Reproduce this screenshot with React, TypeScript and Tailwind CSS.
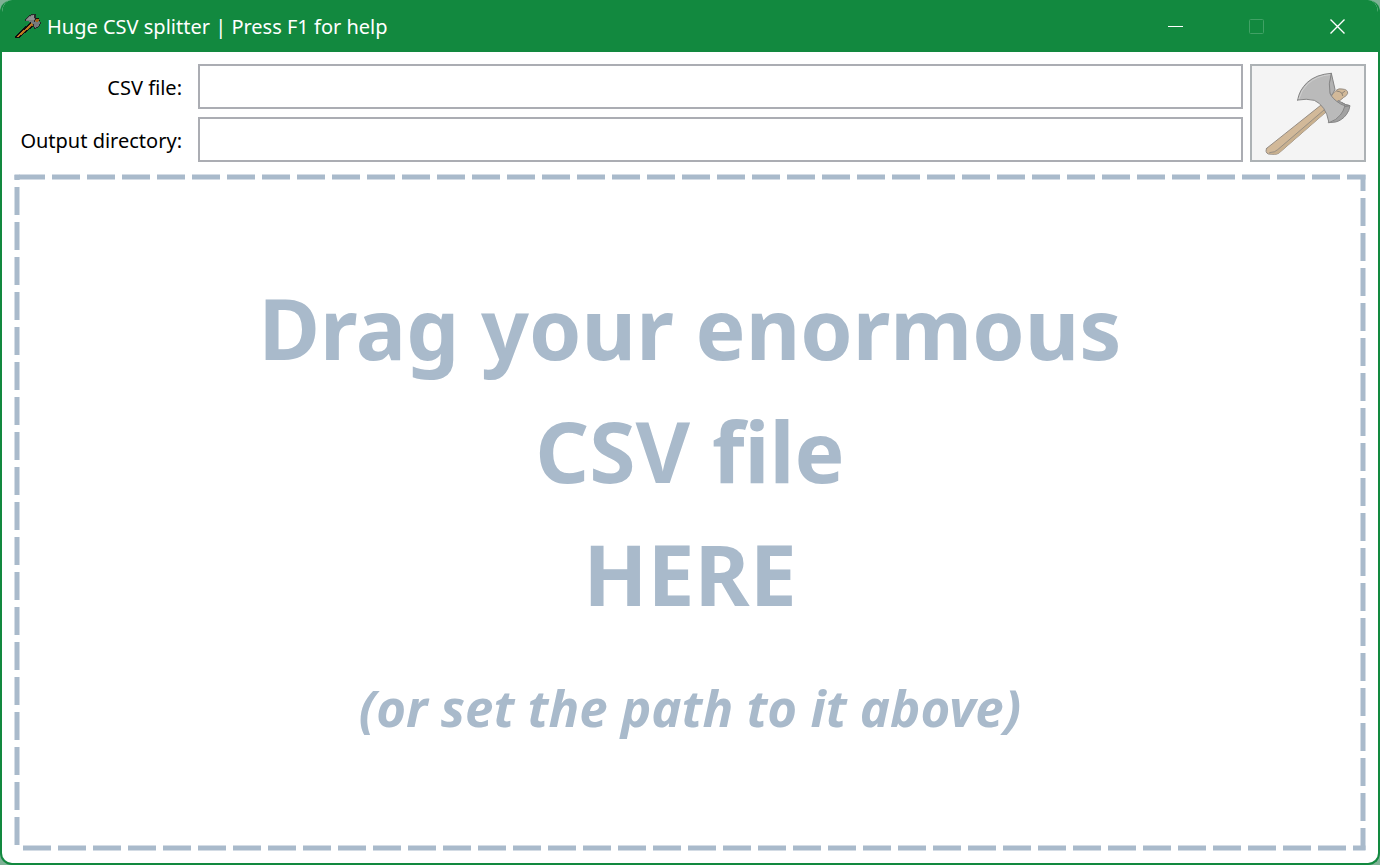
import { useState } from "react";

function AxeIcon({ className }: { className?: string }) {
  return (
    <svg viewBox="42 38 84 81" className={className} aria-hidden="true" shapeRendering="crispEdges">
      <path d="M45 114 L45 108 L92 64 L108 54 L117 54 L119 62 L102 76 L56 114 Z" fill="#111" />
      <path d="M48 111 L96 67 L110 57 L116 60 L100 74 L54 111 Z" fill="#b06c1a" />
      <path d="M52 109 L98 69" stroke="#c07a22" strokeWidth="4" />
      <path d="M74 63 Q80 46 102 41 L107 44 L108 56 L122 66 Q121 78 105 86 L98 70 Q92 62 74 63 Z" fill="#77797a" />
      <path d="M74 63 Q80 46 102 41 L107 44 L108 56 M122 66 Q121 78 105 86 L98 70" fill="none" stroke="#1b1b1b" strokeWidth="2.5" />
      <path d="M80 58 Q88 48 101 45 L102 58 Z" fill="#8f9191" />
      <path d="M105 55 L118 56 L117 62 L108 66 Z" fill="#a76318" />
      <path d="M103 43 L106 57 L101 66" stroke="#1b1b1b" strokeWidth="2.5" fill="none" />
    </svg>
  );
}

function LargeAxe({ className }: { className?: string }) {
  return (
    <svg viewBox="86 46 264 255" className={className} aria-hidden="true" strokeLinejoin="round" strokeLinecap="round">
      <path
        d="M94 278 L256 149 L304 103 Q310 98 320 100 Q338 101 337 113 Q335 120 324 126 L272 169 L131 292 Q126 296 117 296 L99 295 Q88 290 94 278 Z"
        fill="#d2b999"
        stroke="#968d84"
        strokeWidth="3"
      />
      <path d="M131 292 L272 169 L266 162 L126 284 Q120 289 103 293 Q112 297 123 295 Z" fill="#c8b08f" />
      <path d="M103 291 Q120 290 127 282 L266 163" fill="none" stroke="#8d877f" strokeWidth="2.5" />
      <path d="M304 106 Q315 107 320 113 L322 120 M320 113 L328 107" fill="none" stroke="#82796f" strokeWidth="2.5" />
      <path d="M288 53 L299 101 L289 120 L278 103 Z" fill="#b2b2b2" stroke="#858585" strokeWidth="3" />
      <path
        d="M309 135 L320 141 Q332 149 344 150 Q342 165 333 177 Q320 194 301 199 L280 201 Z"
        fill="#a2a2a2"
        stroke="#858585"
        strokeWidth="3"
      />
      <path
        d="M187 133 Q191 104 216 80 Q243 56 288 53 Q278 86 284 113 Q291 130 316 145 Q324 149 329 150 Q324 168 315 178 Q304 193 281 201 Q276 174 265 158 Q252 140 237 134 Q214 128 187 133 Z"
        fill="#bababa"
        stroke="#858585"
        strokeWidth="3"
      />
      <path d="M191 129 Q196 105 218 84 Q243 61 283 57" fill="none" stroke="#d0d0d0" strokeWidth="3" />
      <path d="M320 141 Q331 149 344 150 L329 153" fill="none" stroke="#858585" strokeWidth="3" />
    </svg>
  );
}

function DashedFrame() {
  return (
    <svg
      className="pointer-events-none absolute inset-0 size-full"
      aria-hidden="true"
      stroke="#a9bacb"
      strokeWidth="5"
      strokeDasharray="28 7"
    >
      <line x1="6" y1="3" x2="100%" y2="3" strokeDashoffset="2.5" transform="translate(-0.5 0)" />
      <line x1="100%" y1="2" x2="100%" y2="100%" transform="translate(-3 -1)" strokeDashoffset="12" />
      <line x1="5" y1="100%" x2="100%" y2="100%" transform="translate(-0.5 -3)" strokeDashoffset="-4.5" />
      <line x1="3" y1="1" x2="3" y2="100%" strokeDashoffset="-12" />
      <line x1="0.5" y1="3" x2="6" y2="3" strokeDasharray="none" />
    </svg>
  );
}

export default function App() {
  const [file, setFile] = useState("");
  const [directory, setDirectory] = useState("");
  const field =
    "min-w-0 border-2 border-[#abadb3] bg-white px-2 text-xl text-black outline-none focus:border-[#0078d7]";

  return (
    <div className="min-h-screen bg-[#7fb296] font-['Noto_Sans','Open_Sans',sans-serif]">
      <div className="flex min-h-screen flex-col overflow-hidden rounded-xl border-x-2 border-b-2 border-[#12893f] bg-white">
        <header className="flex h-[52px] shrink-0 items-center bg-[#12893f] text-white">
          <AxeIcon className="ml-3 h-[27px] w-7 shrink-0" />
          <h1 className="ml-[5px] flex-1 truncate pt-[2px] text-xl">Huge CSV splitter | Press F1 for help</h1>
          <div className="flex self-stretch">
            <button type="button" aria-label="Minimize" className="flex w-[81px] items-center justify-center">
              <svg width="15" height="15" viewBox="0 0 15 15" aria-hidden="true">
                <path d="M0 7.5H15" stroke="#fff" />
              </svg>
            </button>
            <button type="button" aria-label="Maximize" disabled className="flex w-[81px] items-center justify-center">
              <svg width="15" height="15" viewBox="0 0 15 15" aria-hidden="true">
                <rect x="0.5" y="0.5" width="14" height="14" rx="1" fill="none" stroke="#41a165" />
              </svg>
            </button>
            <button type="button" aria-label="Close" className="flex w-[81px] items-center justify-center">
              <svg width="15" height="15" viewBox="0 0 15 15" aria-hidden="true">
                <path d="M0.5 0.5L14.5 14.5M14.5 0.5L0.5 14.5" stroke="#fff" strokeWidth="1.4" />
              </svg>
            </button>
          </div>
        </header>

        <main className="flex flex-1 flex-col gap-3 p-3">
          <form className="flex gap-[7px]" onSubmit={(e) => e.preventDefault()}>
            <div className="grid flex-1 grid-cols-[168px_1fr] grid-rows-2 gap-x-4 gap-y-2">
              <label htmlFor="csv-file" className="self-center pt-[2px] text-right text-xl whitespace-nowrap text-black">
                CSV file:
              </label>
              <input id="csv-file" type="text" value={file} onChange={(e) => setFile(e.target.value)} className={field} />
              <label
                htmlFor="output-directory"
                className="self-center pt-[2px] text-right text-xl whitespace-nowrap text-black"
              >
                Output directory:
              </label>
              <input
                id="output-directory"
                type="text"
                value={directory}
                onChange={(e) => setDirectory(e.target.value)}
                className={field}
              />
            </div>
            <button
              type="submit"
              aria-label="Split"
              disabled
              className="flex h-[98px] w-[116px] shrink-0 items-center justify-center border-2 border-[#adb2b5] bg-[#f4f4f4]"
            >
              <LargeAxe className="h-[85px] w-[88px]" />
            </button>
          </form>

          <section className="relative flex flex-1 flex-col items-center justify-center px-6 pt-6 pb-10 text-center font-bold text-[#a9bacb]">
            <DashedFrame />
            <p className="text-[84px] leading-[123px]">
              Drag your enormous
              <br />
              CSV file
              <br />
              HERE
            </p>
            <p className="mt-9 text-[51px] leading-[72px] italic">(or set the path to it above)</p>
          </section>
        </main>
      </div>
    </div>
  );
}
